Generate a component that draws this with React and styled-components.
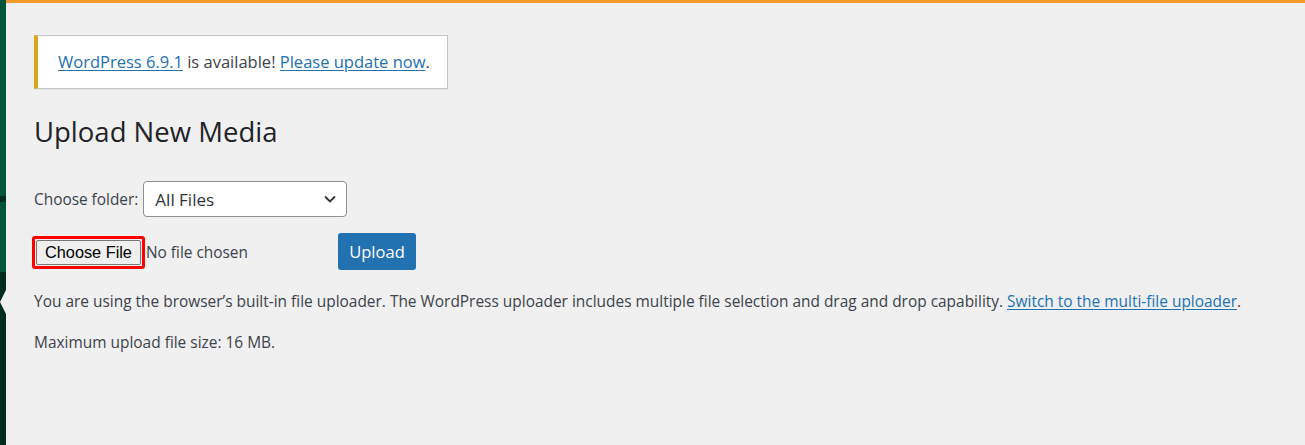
import * as React from 'react';
import styled, { createGlobalStyle } from 'styled-components';

const GlobalStyle = createGlobalStyle`
  html, body {
    margin: 0;
    padding: 0;
    background: #f0f0f1;
  }

  body {
    font-family: "Open Sans", "Noto Sans", sans-serif;
    color: #3c434a;
  }
`;

const Page = styled.div`
  display: flex;
  min-height: 100vh;
`;

const Sidebar = styled.div`
  position: relative;
  display: flex;
  flex-direction: column;
  flex-shrink: 0;
  width: 6px;
`;

const SidebarBlock = styled.div`
  height: ${props => props.size ? `${props.size}px` : 'auto'};
  flex-grow: ${props => props.size ? 0 : 1};
  background: ${props => props.tone};
`;

const CurrentArrow = styled.div`
  position: absolute;
  top: 290px;
  right: 0;
  width: 0;
  height: 0;
  border-top: 12px solid transparent;
  border-bottom: 12px solid transparent;
  border-right: 6px solid #f0f0f1;
`;

const Main = styled.main`
  flex-grow: 1;
  border-top: 3px solid #f39c2c;
  padding: 32px 20px 0 28px;
`;

const Notice = styled.div`
  display: inline-block;
  background: #fff;
  border: 1px solid #c3c4c7;
  border-left: 4px solid #dba617;
  box-shadow: 0 1px 1px rgba(0, 0, 0, 0.04);
  padding: 14px 17px 15px 20px;
  font-size: 16.5px;
  line-height: 23px;
  color: #3c434a;
`;

const Link = styled.a`
  color: #2271b1;
  text-decoration: underline;
  text-underline-offset: 2px;
`;

const Title = styled.h1`
  margin: 21px 0 0;
  font-size: 27.5px;
  font-weight: 400;
  line-height: 44px;
  color: #1d2327;
`;

const FolderRow = styled.div`
  display: flex;
  align-items: center;
  margin-top: 27px;
  font-size: 15.4px;
`;

const Select = styled.div`
  display: flex;
  align-items: center;
  justify-content: space-between;
  box-sizing: border-box;
  width: 204px;
  height: 36px;
  margin-left: 5px;
  padding: 0 9px 0 11px;
  background: #fff;
  border: 1px solid #8c8f94;
  border-radius: 4px;
  font-size: 17px;
  color: #2c3338;
`;

const UploadRow = styled.div`
  display: flex;
  align-items: center;
  margin-top: 17px;
`;

const FileInput = styled.div`
  display: flex;
  align-items: center;
  width: 306px;
  margin-left: -2px;
`;

const Highlight = styled.div`
  display: flex;
  padding: 1px;
  border: 3px solid #ff0000;
  border-radius: 3px;
`;

const FileButton = styled.div`
  box-sizing: border-box;
  width: 105px;
  height: 25px;
  background: #efefef;
  border: 1px solid #767676;
  border-radius: 2px;
  font-family: "Liberation Sans", Arial, sans-serif;
  font-size: 16.3px;
  line-height: 23px;
  text-align: center;
  color: #000;
`;

const FileName = styled.span`
  margin-left: 1px;
  font-size: 15.4px;
  color: #3c434a;
`;

const PrimaryButton = styled.div`
  box-sizing: border-box;
  width: 78px;
  height: 37px;
  margin-top: -1px;
  background: #2271b1;
  border-radius: 3px;
  color: #fff;
  font-size: 16.5px;
  line-height: 37px;
  text-align: center;
`;

const Text = styled.p`
  margin: ${props => props.spaced ? '20px' : '19px'} 0 0;
  font-size: 15.45px;
  line-height: 22px;
  color: #3c434a;
`;

const Chevron = () => (
  <svg width="14" height="14" viewBox="0 0 14 14" fill="none">
    <path d="M2 4.5 L7 9.5 L12 4.5" stroke="#2c3338" strokeWidth="1.8" />
  </svg>
);

export default function App() {
  return (
    <Page>
      <GlobalStyle />
      <Sidebar>
        <SidebarBlock size={196} tone="#04543a" />
        <SidebarBlock size={6} tone="#01301f" />
        <SidebarBlock size={70} tone="#04543a" />
        <SidebarBlock tone="#012b1e" />
        <CurrentArrow />
      </Sidebar>
      <Main>
        <Notice>
          <Link href="#">WordPress 6.9.1</Link> is available! <Link href="#">Please update now</Link>.
        </Notice>
        <Title>Upload New Media</Title>
        <FolderRow>
          Choose folder:
          <Select>
            All Files
            <Chevron />
          </Select>
        </FolderRow>
        <UploadRow>
          <FileInput>
            <Highlight>
              <FileButton>Choose File</FileButton>
            </Highlight>
            <FileName>No file chosen</FileName>
          </FileInput>
          <PrimaryButton>Upload</PrimaryButton>
        </UploadRow>
        <Text spaced>
          You are using the browser’s built-in file uploader. The WordPress uploader includes multiple file selection and drag and drop capability. <Link href="#">Switch to the multi-file uploader</Link>.
        </Text>
        <Text>Maximum upload file size: 16 MB.</Text>
      </Main>
    </Page>
  );
}
